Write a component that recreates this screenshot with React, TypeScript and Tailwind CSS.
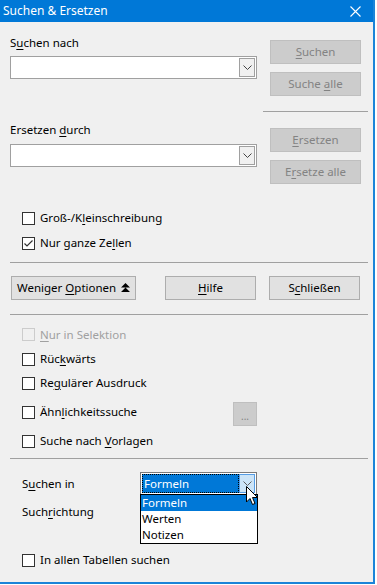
import type { ReactNode } from "react";

const FONT = "font-['Segoe_UI','Noto_Sans',sans-serif]";

function U({ children }: { children: ReactNode }) {
  return <span className="underline underline-offset-2">{children}</span>;
}

function Combo() {
  return (
    <div className="flex h-[23px] w-[247px] items-stretch border border-[#a0a0a0] bg-white p-px">
      <div className="flex-1" />
      <div className="flex w-[16px] items-center justify-center border border-[#a0a0a0] bg-[#f0f0f0]">
        <Chevron />
      </div>
    </div>
  );
}

function Chevron({ color = "#444" }: { color?: string }) {
  return (
    <svg width="9" height="5" viewBox="0 0 9 5">
      <path d="M0.5 0.5 L4.5 4.5 L8.5 0.5" fill="none" stroke={color} strokeWidth="1" />
    </svg>
  );
}

function Btn({ children, disabled, className = "w-[91px] justify-center" }: { children: ReactNode; disabled?: boolean; className?: string }) {
  return (
    <div
      className={`flex h-[24px] items-center whitespace-nowrap border ${className} ${
        disabled ? "border-[#bfbfbf] bg-[#cccccc] text-[#838383]" : "border-[#adadad] bg-[#e1e1e1] text-black"
      }`}
    >
      {children}
    </div>
  );
}

function Check({ children, checked, disabled, h = "h-[24px]" }: { children: ReactNode; checked?: boolean; disabled?: boolean; h?: string }) {
  return (
    <div className={`flex ${h} items-center pl-[22px]`}>
      <div
        className={`mr-[5px] flex h-[13px] w-[13px] items-center justify-center border ${
          disabled ? "border-[#cccccc] bg-[#f0f0f0]" : "border-[#333333] bg-white"
        }`}
      >
        {checked && (
          <svg width="11" height="11" viewBox="0 0 11 11">
            <path d="M1.5 5.5 L4 8 L9.5 2.5" fill="none" stroke="#333" strokeWidth="1.2" />
          </svg>
        )}
      </div>
      <span className={`whitespace-nowrap ${disabled ? "text-[#a0a0a0]" : "text-black"}`}>{children}</span>
    </div>
  );
}

function Sep({ className = "ml-[10px] w-[358px]" }: { className?: string }) {
  return <div className={`h-px shrink-0 bg-[#a0a0a0] ${className}`} />;
}

export default function App() {
  return (
    <div className={`relative h-[585px] w-[377px] overflow-hidden bg-white text-[11.5px] leading-[16px] ${FONT}`}>
      <div className="relative flex h-[584px] w-[375px] flex-col border-r-2 border-b-2 border-[#1b84d8] bg-[#f0f0f0]">
        {/* title bar */}
        <div className="flex h-[22px] shrink-0 items-center justify-between bg-[#0078d7] pl-[3px] pr-[12px] text-[12px] text-white">
          <span>Suchen &amp; Ersetzen</span>
          <svg width="11" height="11" viewBox="0 0 11 11">
            <path d="M0.5 0.5 L10.5 10.5 M10.5 0.5 L0.5 10.5" stroke="white" strokeWidth="1.1" />
          </svg>
        </div>

        {/* Suchen nach */}
        <div className="flex shrink-0">
          <div className="ml-[10px] w-[247px]">
            <div className="mt-[13px] h-[16px]">
              S<U>u</U>chen nach
            </div>
            <div className="mt-[5px]">
              <Combo />
            </div>
          </div>
          <div className="ml-[13px] w-[91px]">
            <div className="mt-[18px]">
              <Btn disabled>
                <span>
                  <U>S</U>uchen
                </span>
              </Btn>
            </div>
            <div className="mt-[8px]">
              <Btn disabled>
                <span>
                  Suche <U>a</U>lle
                </span>
              </Btn>
            </div>
          </div>
        </div>

        <div className="mt-[15px] shrink-0">
          <Sep className="ml-[263px] w-[105px]" />
        </div>

        {/* Ersetzen durch */}
        <div className="flex shrink-0">
          <div className="ml-[10px] w-[247px]">
            <div className="mt-[10px] h-[16px]">
              Ersetzen <U>d</U>urch
            </div>
            <div className="mt-[6px]">
              <Combo />
            </div>
          </div>
          <div className="ml-[13px] w-[91px]">
            <div className="mt-[16px]">
              <Btn disabled>
                <span>
                  <U>E</U>rsetzen
                </span>
              </Btn>
            </div>
            <div className="mt-[8px]">
              <Btn disabled>
                <span>
                  E<U>r</U>setze alle
                </span>
              </Btn>
            </div>
          </div>
        </div>

        <div className="mt-[22px] flex shrink-0 flex-col gap-px">
          <Check>
            Groß-/K<U>l</U>einschreibung
          </Check>
          <Check checked>
            Nur ganze Ze<U>l</U>len
          </Check>
        </div>

        <div className="mt-[7px] shrink-0">
          <Sep />
        </div>

        <div className="mt-[13px] flex shrink-0 pl-[11px]">
          <Btn className="w-[125px] justify-between pl-[5px] pr-[5px]">
            <span>
              Weniger <U>O</U>ptionen
            </span>
            <svg width="9" height="10" viewBox="0 0 9 10">
              <path d="M4.5 0 L9 4.5 L0 4.5 Z M4.5 4.5 L9 9 L0 9 Z" fill="#000" />
            </svg>
          </Btn>
          <div className="ml-[29px]">
            <Btn>
              <span>
                <U>H</U>ilfe
              </span>
            </Btn>
          </div>
          <div className="ml-[13px]">
            <Btn>
              <span>
                S<U>c</U>hließen
              </span>
            </Btn>
          </div>
        </div>

        <div className="mt-[14px] shrink-0">
          <Sep />
        </div>

        <div className="mt-[7px] flex shrink-0 flex-col">
          <Check disabled h="h-[25px]">
            <U>N</U>ur in Selektion
          </Check>
          <Check>
            Rüc<U>k</U>wärts
          </Check>
          <Check>
            Re<U>g</U>ulärer Ausdruck
          </Check>
          <div className="flex h-[34px] items-center">
            <div className="w-[233px]">
              <Check>
                Ähn<U>l</U>ichkeitssuche
              </Check>
            </div>
            <div className="mt-[3px]">
              <Btn disabled className="w-[24px] justify-center">
                <span className="pt-[4px] text-[10px] leading-[10px]">...</span>
              </Btn>
            </div>
          </div>
          <Check>
            Suche nach <U>V</U>orlagen
          </Check>
        </div>

        <div className="mt-[5px] shrink-0">
          <Sep />
        </div>

        {/* Suchen in */}
        <div className="mt-[13px] flex h-[23px] shrink-0 items-center">
          <div className="w-[140px] pl-[22px]">
            S<U>u</U>chen in
          </div>
          <div className="flex h-[23px] w-[117px] border border-[#7a7a7a] bg-white p-px">
            <div className="flex flex-1 items-center border border-dotted border-black bg-[#0078d7] pl-px text-white">
              Formeln
            </div>
            <div className="flex w-[16px] items-center justify-center border border-[#569de5] bg-[#cce4f7]">
              <Chevron color="#606060" />
            </div>
          </div>
        </div>

        <div className="mt-[5px] flex h-[24px] shrink-0 items-center pl-[22px]">
          <span>
            Such<U>r</U>ichtung
          </span>
        </div>

        <div className="mt-[24px] shrink-0">
          <Check>In allen Tabellen suchen</Check>
        </div>

        {/* open dropdown list */}
        <div className="absolute left-[140px] top-[494px] flex w-[118px] flex-col border border-black bg-white">
          <div className="h-[16px] bg-[#0078d7] pl-[1px] text-white">Formeln</div>
          <div className="h-[16px] pl-[1px]">Werten</div>
          <div className="h-[16px] pl-[1px]">Notizen</div>
        </div>

        {/* mouse cursor */}
        <svg className="absolute left-[246px] top-[486px]" width="13" height="20" viewBox="0 0 13 20">
          <path d="M0.5 0.5 L0.5 16 L4 12.5 L6.5 18.5 L9 17.5 L6.5 11.5 L11.5 11.5 Z" fill="white" stroke="black" strokeWidth="1" />
        </svg>
      </div>
    </div>
  );
}
